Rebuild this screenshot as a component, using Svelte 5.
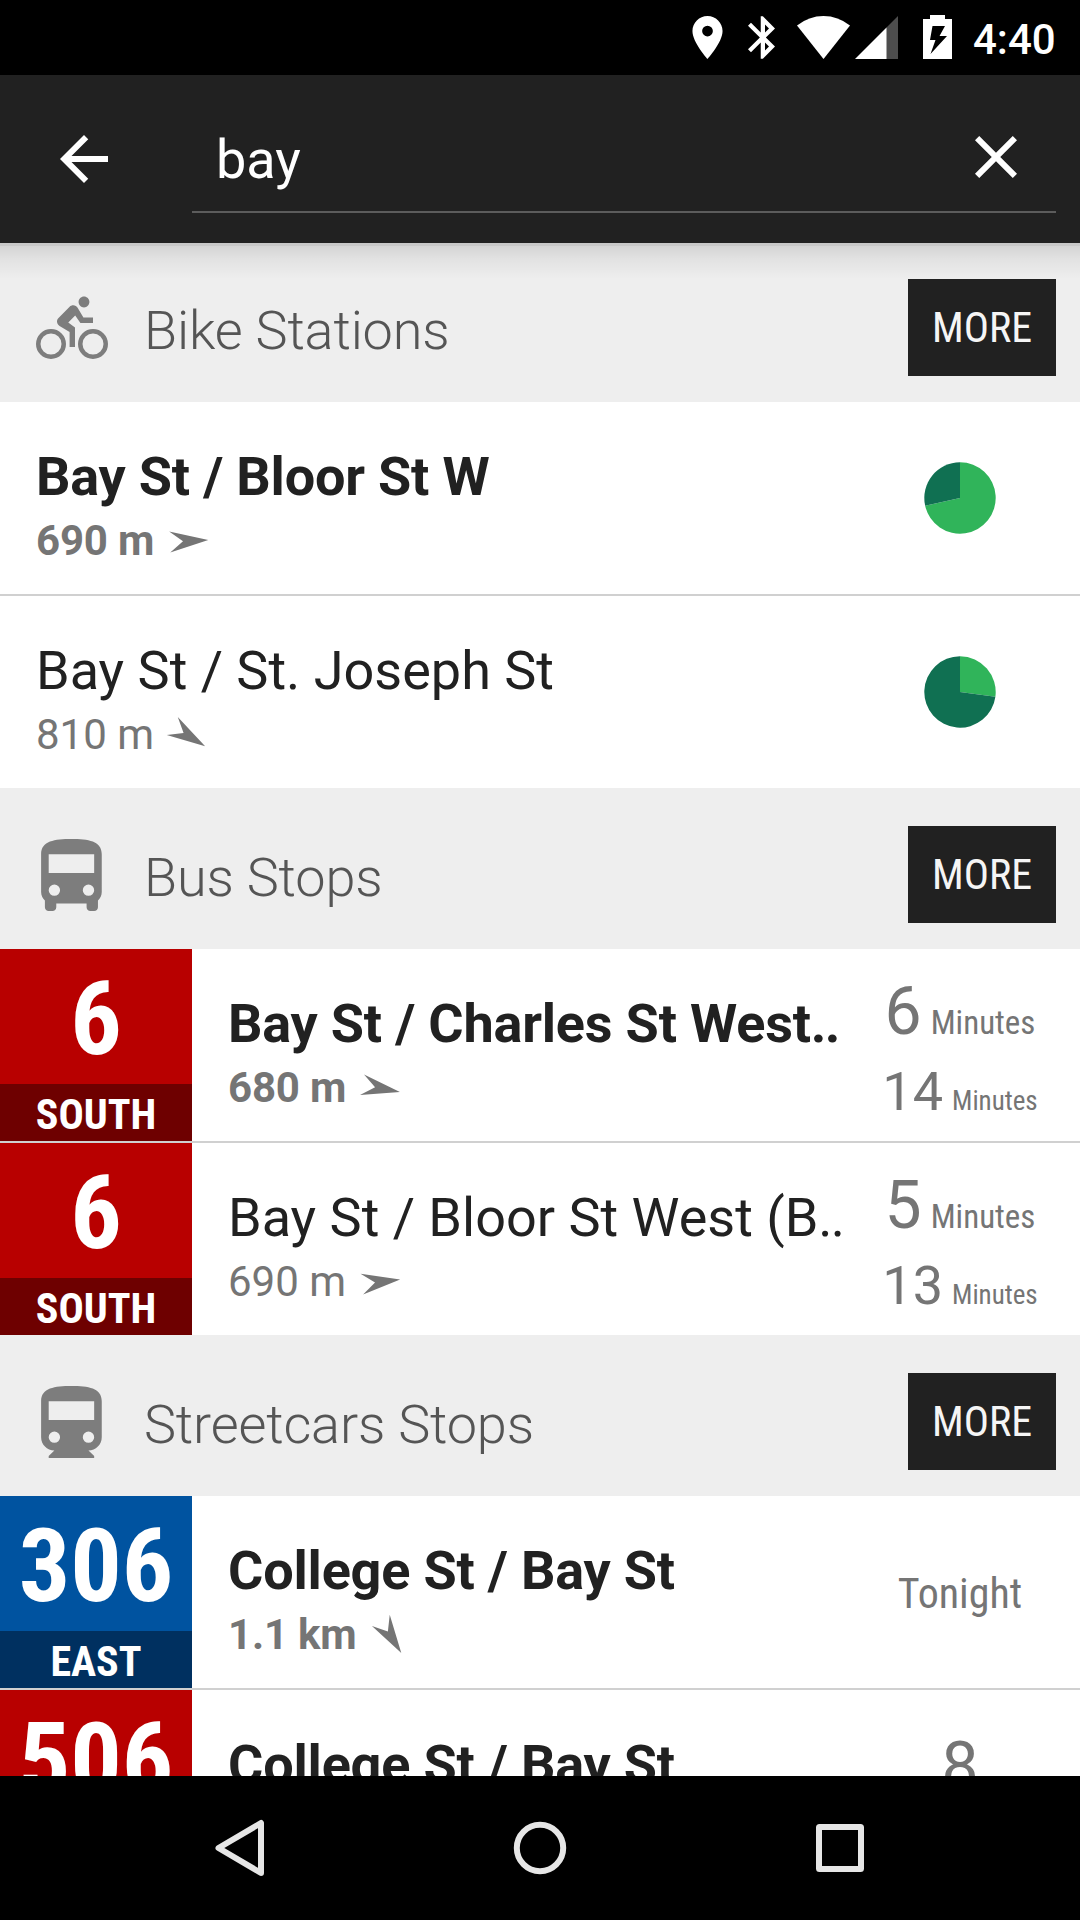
<script>
  const sections = [
    {
      title: 'Bike Stations',
      icon: 'bike',
      rows: [
        { name: 'Bay St / Bloor St W', distance: '690 m', angle: -3, bold: true, fill: 0.715 },
        { name: 'Bay St / St. Joseph St', distance: '810 m', angle: 31.6, bold: false, fill: 0.271 }
      ]
    },
    {
      title: 'Bus Stops',
      icon: 'bus',
      rows: [
        { route: '6', heading: 'SOUTH', tone: 'red', name: 'Bay St / Charles St West', cut: true, distance: '680 m', angle: 11, bold: true, times: ['6', '14'] },
        { route: '6', heading: 'SOUTH', tone: 'red', name: 'Bay St / Bloor St West (B', cut: true, distance: '690 m', angle: -7, bold: false, times: ['5', '13'] }
      ]
    },
    {
      title: 'Streetcars Stops',
      icon: 'tram',
      rows: [
        { route: '306', heading: 'EAST', tone: 'blue', name: 'College St / Bay St', distance: '1.1 km', angle: 58, bold: true, note: 'Tonight' },
        { route: '506', heading: 'EAST', tone: 'red', name: 'College St / Bay St', distance: '1.1 km', angle: 58, bold: true, stacked: '8' }
      ]
    }
  ];

  // Pie sector path, from and to given as fractions of a full turn.
  function sector(from, to) {
    const point = (f) => {
      const a = f * 2 * Math.PI;
      return `${(36 + 35.7 * Math.sin(a)).toFixed(2)} ${(36 - 35.7 * Math.cos(a)).toFixed(2)}`;
    };
    return `M36 36L${point(from)}A35.7 35.7 0 ${to - from > 0.5 ? 1 : 0} 1 ${point(to)}Z`;
  }
</script>

<div class="screen">
  <div class="status">
    <svg class="pin" viewBox="5 2 14 20"><path d="M12 2C8.13 2 5 5.13 5 9c0 5.25 7 13 7 13s7-7.75 7-13c0-3.87-3.13-7-7-7zm0 9.5a2.5 2.5 0 1 1 0-5 2.5 2.5 0 0 1 0 5z" /></svg>
    <svg class="bluetooth" viewBox="5 2 12.71 20"><path d="M17.71 7.71L12 2h-1v7.59L6.41 5 5 6.41 10.59 12 5 17.59 6.41 19 11 14.41V22h1l5.71-5.71-4.3-4.29 4.3-4.29zM13 5.83l1.88 1.88L13 9.59V5.83zm1.88 10.46L13 18.17v-3.76l1.88 1.88z" /></svg>
    <svg class="wifi" viewBox="0 0 53 43"><path d="M0 9.5Q12 0 26.500 0T53 9.500L26.500 43Z" /></svg>
    <svg class="signal" viewBox="0 0 43 43"><path class="dim" d="M43 0V43H31V12Z" /><path d="M0 43L31.500 11.500V43Z" /></svg>
    <svg class="battery" viewBox="0 0 29 44"><path fill-rule="evenodd" d="M7 0H22V4H29V44H0V4H7ZM9.500 11L7 25H12.500L7.500 39L24 21H16.500L22 11Z" /></svg>
    <span class="clock">4:40</span>
  </div>

  <div class="toolbar">
    <svg class="back" viewBox="0 0 24 24"><path d="M20 11H7.830l5.590-5.590L12 4l-8 8 8 8 1.410-1.410L7.830 13H20v-2z" /></svg>
    <div class="field">
      <span class="query">bay</span>
      <svg class="clear" viewBox="0 0 24 24"><path d="M19 6.410L17.590 5 12 10.590 6.410 5 5 6.410 10.590 12 5 17.590 6.410 19 12 13.410 17.590 19 19 17.590 13.410 12z" /></svg>
    </div>
    <div class="shadow"></div>
  </div>

  <div class="list">
    {#each sections as section}
      <div class="section">
        {#if section.icon === 'bike'}
          <svg class="icon bike" viewBox="0 0 24 24">
            <path d="M16 4.800c.990 0 1.800-.810 1.800-1.800s-.810-1.800-1.800-1.800-1.800.810-1.800 1.800.800 1.800 1.800 1.800zM14.800 10H19V8.200h-3.200l-1.930-3.270c-.300-.500-.840-.830-1.460-.830-.470 0-.890.190-1.200.500l-3.700 3.700c-.320.300-.510.730-.510 1.200 0 .630.330 1.160.850 1.470L11.200 13v5H13v-6.480l-2.250-1.670 2.320-2.330L14.800 10z" />
            <circle class="wheel" cx="5" cy="17" r="4.25" />
            <circle class="wheel" cx="19" cy="17" r="4.25" />
          </svg>
        {:else if section.icon === 'bus'}
          <svg class="icon" viewBox="2.650 2 19 19"><path fill-rule="evenodd" d="M4 16c0 .88.39 1.670 1 2.220V20c0 .55.45 1 1 1h1c.55 0 1-.45 1-1v-1h8v1c0 .55.45 1 1 1h1c.55 0 1-.45 1-1v-1.780c.61-.55 1-1.340 1-2.220V6c0-3.500-3.580-4-8-4s-8 .5-8 4v10zM6 6h12v5H6zM7.500 17a1.500 1.500 0 1 1 0-3 1.500 1.500 0 0 1 0 3zm9 0a1.500 1.500 0 1 1 0-3 1.500 1.500 0 0 1 0 3z" /></svg>
        {:else}
          <svg class="icon" viewBox="2.650 2 19 19"><path fill-rule="evenodd" d="M12 2c-4.420 0-8 .5-8 4v9.500C4 17.430 5.570 19 7.500 19L6 20.500v.5h12v-.5L16.500 19c1.930 0 3.500-1.570 3.500-3.500V6c0-3.500-3.580-4-8-4zM6 6h12v5H6zM7.500 17a1.500 1.500 0 1 1 0-3 1.500 1.500 0 0 1 0 3zm9 0a1.500 1.500 0 1 1 0-3 1.500 1.500 0 0 1 0 3z" /></svg>
        {/if}
        <span class="section-title">{section.title}</span>
        <span class="more">MORE</span>
      </div>

      {#each section.rows as row}
        <div class="row">
          {#if row.route}
            <div class="badge {row.tone}">
              <span class="route">{row.route}</span>
              <span class="heading">{row.heading}</span>
            </div>
          {/if}
          <div class="info" class:bold={row.bold}>
            <div class="name">{row.name}{#if row.cut}<span class="dots">..</span>{/if}</div>
            <div class="distance">
              <span>{row.distance}</span>
              <svg class="arrow" viewBox="-21 -21 42 42"><path transform="rotate({row.angle})" d="M21.300 0L-17.300 -10.500L-4 0L-17.300 10.500Z" /></svg>
            </div>
          </div>
          <div class="side">
            {#if row.fill}
              <svg class="pie" viewBox="0 0 72 72">
                <path class="free" d={sector(0, row.fill)} />
                <path class="used" d={sector(row.fill, 1)} />
              </svg>
            {:else if row.times}
              <div class="first"><b>{row.times[0]}</b><i>Minutes</i></div>
              <div class="second"><b>{row.times[1]}</b><i>Minutes</i></div>
            {:else if row.note}
              <span class="note">{row.note}</span>
            {:else}
              <span class="stacked">{row.stacked}</span>
            {/if}
          </div>
        </div>
      {/each}
    {/each}
  </div>

  <div class="nav">
    <svg viewBox="0 0 72 72"><path d="M57 11V61L14.500 36Z" /></svg>
    <svg viewBox="0 0 72 72"><circle cx="36" cy="36" r="23.200" /></svg>
    <svg viewBox="0 0 72 72"><rect x="15" y="15" width="42" height="42" rx="0.500" /></svg>
  </div>
</div>

<style>
  :global(body) {
    margin: 0;
    background: #000;
  }
  .screen {
    display: flex;
    flex-direction: column;
    width: 1080px;
    height: 1920px;
    overflow: hidden;
    font-family: Roboto, sans-serif;
    background: #fff;
  }
  svg {
    display: block;
    flex: none;
  }
  .status {
    display: flex;
    flex: none;
    box-sizing: border-box;
    height: 75px;
    padding: 16px 0 0 692px;
    background: #000;
    fill: #fff;
  }
  .pin { width: 31px; height: 43px; }
  .bluetooth { width: 27px; height: 43px; margin-left: 25px; }
  .wifi { width: 53px; height: 43px; margin-left: 22px; }
  .signal { width: 43px; height: 43px; margin-left: 5px; }
  .dim { fill: #4d4d4d; }
  .battery { width: 29px; height: 44px; margin: -1px 0 0 25px; }
  .clock {
    margin-left: 21px;
    color: #fff;
    font-size: 42px;
    font-weight: 500;
    line-height: 47px;
  }
  .toolbar {
    position: relative;
    z-index: 1;
    display: flex;
    flex: none;
    box-sizing: border-box;
    height: 168px;
    padding: 0 24px 30px 48px;
    background: #212121;
    fill: #fff;
  }
  .back { width: 72px; height: 72px; margin-top: 48px; }
  .field {
    display: flex;
    flex: 1;
    margin-left: 72px;
    padding: 0 24px;
    border-bottom: 2px solid #5c5c5c;
  }
  .query {
    flex: 1;
    color: #fff;
    font-size: 54px;
    line-height: 170px;
  }
  .clear { width: 72px; height: 72px; margin-top: 46px; }
  .shadow {
    position: absolute;
    top: 168px;
    left: 0;
    width: 100%;
    height: 36px;
    background: linear-gradient(rgba(0, 0, 0, 0.16), rgba(0, 0, 0, 0.16) 3px, rgba(0, 0, 0, 0.11) 3px, rgba(0, 0, 0, 0.05) 16px, transparent);
  }
  .list {
    flex: 1;
    min-height: 0;
    margin-top: -2px;
    overflow: hidden;
  }
  .section {
    display: flex;
    align-items: flex-start;
    height: 161px;
    padding: 0 24px 0 36px;
    background: #eee;
  }
  .icon {
    width: 72px;
    height: 72px;
    margin-top: 51px;
    fill: #7d7d7d;
  }
  .bike { margin-top: 52px; }
  .wheel {
    fill: none;
    stroke: #7d7d7d;
    stroke-width: 1.5;
  }
  .section-title {
    flex: 1;
    margin-left: 36px;
    color: #555;
    font-size: 54px;
    font-weight: 300;
    letter-spacing: -0.15px;
    line-height: 179px;
  }
  .more {
    position: relative;
    z-index: 2;
    width: 148px;
    height: 97px;
    margin-top: 38px;
    background: #212121;
    color: #f5f5f5;
    font-family: 'Roboto Condensed', Roboto, sans-serif;
    font-size: 42px;
    font-stretch: 75%;
    line-height: 97px;
    text-align: center;
  }
  .row {
    display: flex;
    height: 192px;
    background: #fff;
  }
  .row + .row {
    border-top: 2px solid #d0d0d0;
  }
  .badge {
    display: flex;
    flex: none;
    flex-direction: column;
    width: 192px;
    color: #fff;
    font-family: 'Roboto Condensed', Roboto, sans-serif;
    font-stretch: 75%;
    font-weight: 700;
    text-align: center;
  }
  .route {
    height: 135px;
    font-size: 102px;
    line-height: 140px;
  }
  .heading {
    height: 57px;
    font-size: 42px;
    line-height: 61px;
  }
  .red { background: #b80000; }
  .red .heading { background: #6e0000; }
  .blue { background: #0053a0; }
  .blue .heading { background: #003060; }
  .info {
    flex: 1;
    min-width: 0;
    padding: 42px 0 0 36px;
    white-space: nowrap;
  }
  .name {
    color: #212121;
    font-size: 54px;
    line-height: 65px;
  }
  .dots { letter-spacing: -1.8px; }
  .distance {
    display: flex;
    align-items: center;
    height: 64px;
    color: #757575;
    font-size: 42px;
    line-height: 64px;
  }
  .bold {
    font-weight: 700;
    letter-spacing: -0.19px;
  }
  .arrow {
    width: 42px;
    height: 42px;
    margin-left: 12px;
    overflow: visible;
    fill: #757575;
  }
  .side {
    flex: none;
    width: 240px;
    color: #757575;
    text-align: center;
    white-space: nowrap;
  }
  .pie {
    width: 72px;
    height: 72px;
    margin: 60px auto;
  }
  .free { fill: #30b45a; }
  .used { fill: #107052; }
  .side b { font-weight: 400; }
  .side i,
  .note {
    font-family: 'Roboto Condensed', Roboto, sans-serif;
    font-stretch: 75%;
    font-style: normal;
  }
  .side i { line-height: 0; }
  .first {
    padding-top: 23px;
    font-size: 66px;
    line-height: 80px;
  }
  .first i { margin-left: 9px; font-size: 33px; }
  .second {
    font-size: 54px;
    line-height: 80px;
  }
  .second i { margin-left: 9px; font-size: 27px; }
  .note {
    font-size: 42px;
    line-height: 195px;
  }
  .stacked {
    font-size: 66px;
    line-height: 154px;
  }
  .nav {
    display: flex;
    flex: none;
    justify-content: center;
    gap: 228px;
    box-sizing: border-box;
    height: 144px;
    padding-top: 36px;
    background: #000;
    fill: none;
    stroke: #e6e6e6;
    stroke-width: 6;
    stroke-linejoin: round;
  }
  .nav svg { width: 72px; height: 72px; }
</style>
